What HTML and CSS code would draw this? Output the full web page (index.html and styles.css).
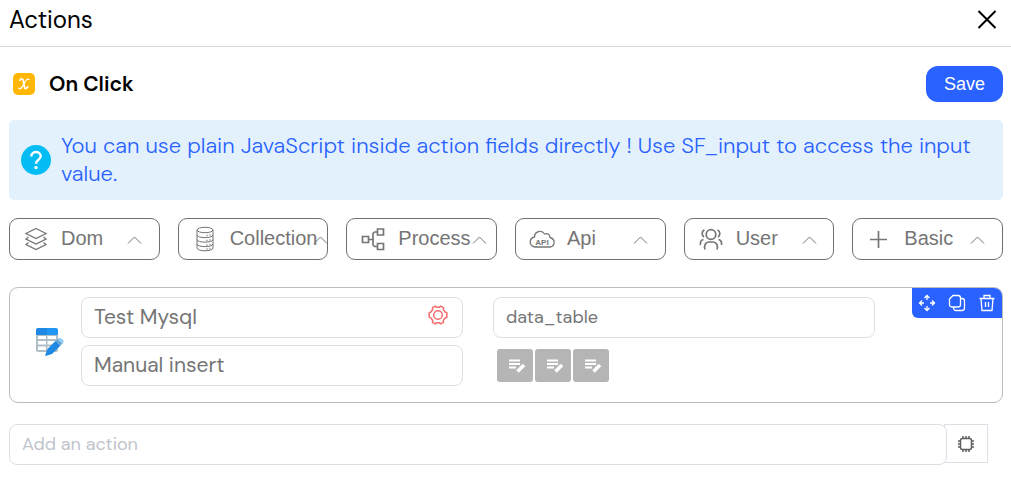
FILE: index.html
```html
<!DOCTYPE html>
<html lang="en">
<head>
    <meta charset="UTF-8">
    <meta name="viewport" content="width=device-width, initial-scale=1.0">
    <title>Actions</title>
    <link rel="stylesheet" href="styles.css">
</head>
<body>
    <!-- Header -->
    <header class="header">
        <h1>Actions</h1>
        <button type="button" class="close-btn" aria-label="Close">
            <svg width="20" height="20" viewBox="0 0 20 20"><path d="M1.500 1l17 17M18.500 1l-17 17"/></svg>
        </button>
    </header>

    <main class="content">
        <div class="event-bar">
            <svg class="event-icon" width="22" height="22" viewBox="0 0 22 22">
                <rect width="22" height="22" rx="5" fill="#ffb703"/>
                <path d="M7 7.200C8.500 5 9.900 5.200 10.400 8L11.300 13.500C11.800 16.300 13.300 16 14.800 13.800" fill="none" stroke="#fff" stroke-width="1.700" stroke-linecap="round"/>
                <path d="M16 6.500C14 5 12.700 7.500 10.900 10.800C9 14.200 7.800 16.700 5.800 15.200" fill="none" stroke="#fff" stroke-width="1.200" stroke-linecap="round"/>
            </svg>
            <h2>On Click</h2>
            <button type="button" class="save-btn">Save</button>
        </div>

        <div class="alert">
            <svg class="alert-icon" width="30" height="30" viewBox="0 0 30 30">
                <circle cx="15" cy="15" r="15" fill="#03bcf4"/>
                <path d="M10.300 11.500C10.300 5.500 19.700 5.700 19.700 11.300C19.700 14.700 15 14.800 15 18.800" fill="none" stroke="#fff" stroke-width="2.400"/>
                <circle cx="15" cy="22.500" r="1.700" fill="#fff"/>
            </svg>
            <p>You can use plain JavaScript inside action fields directly ! Use SF_input to access the input value.</p>
        </div>

        <!-- Action groups -->
        <div class="groups">
            <button type="button" class="group-btn">
                <svg class="group-icon" viewBox="0 0 26 26"><path d="M13 2.500L23 7.500L13 12.500L3 7.500ZM5.500 11L3 13L13 18L23 13L20.500 11M5.500 16.500L3 18.500L13 23.500L23 18.500L20.500 16.500"/></svg>
                <span class="group-name">Dom</span>
                <svg class="chevron" viewBox="0 0 14 8"><path d="M1 7.500L7.500 1L14 7.500"/></svg>
            </button>
            <button type="button" class="group-btn">
                <svg class="group-icon thin" viewBox="0 0 26 26">
                    <ellipse cx="13" cy="4" rx="8" ry="2.700"/>
                    <path d="M5 4V22C5 25.700 21 25.700 21 22V4M5 9C5 12.500 21 12.500 21 9M5 13.500C5 17 21 17 21 13.500M5 18C5 21.500 21 21.500 21 18"/>
                    <path d="M14.500 9.500h1M17.500 9h1M14.500 14.500h1M17.500 14h1M14.500 19h1M17.500 18.500h1M14.500 23h1M17.500 22.500h1" stroke-width="1.500"/>
                </svg>
                <span class="group-name">Collection</span>
                <svg class="chevron" viewBox="0 0 14 8"><path d="M1 7.500L7.500 1L14 7.500"/></svg>
            </button>
            <button type="button" class="group-btn">
                <svg class="group-icon bold" viewBox="0 0 26 26"><path d="M2.500 10.500h6v6h-6zM17.500 3h6v6h-6zM17.500 17.500h6v6h-6zM8.500 13.500H13M17.500 6H14.500L13 7.500V19L14.500 20.500H17.500"/></svg>
                <span class="group-name">Process</span>
                <svg class="chevron" viewBox="0 0 14 8"><path d="M1 7.500L7.500 1L14 7.500"/></svg>
            </button>
            <button type="button" class="group-btn">
                <svg class="group-icon" viewBox="0 0 26 26">
                    <path d="M6 21C-0.500 20 0 12 5.500 11C5.500 5 13 3.500 15.500 8C18.500 7 21 8.500 21 11.500C26.500 13 26.500 20 21 21Z"/>
                    <text x="13" y="18.500" text-anchor="middle">API</text>
                </svg>
                <span class="group-name">Api</span>
                <svg class="chevron" viewBox="0 0 14 8"><path d="M1 7.500L7.500 1L14 7.500"/></svg>
            </button>
            <button type="button" class="group-btn">
                <svg class="group-icon bold" viewBox="0 0 26 26">
                    <circle cx="13" cy="8.500" r="4.800"/>
                    <path d="M7 23.500C5.500 19.500 8 16 10.500 16H15.500C18 16 20.500 19.500 19 23.500M6.500 4C3.500 5 3.500 9.500 6 11M19.500 4C22.500 5 22.500 9.500 20 11M5.500 13.500C3 14 2 16.500 2.500 19M20.500 13.500C23 14 24 16.500 23.500 19"/>
                </svg>
                <span class="group-name">User</span>
                <svg class="chevron" viewBox="0 0 14 8"><path d="M1 7.500L7.500 1L14 7.500"/></svg>
            </button>
            <button type="button" class="group-btn">
                <svg class="group-icon bold" viewBox="0 0 26 26"><path d="M12.500 5V22M4 13.500H21"/></svg>
                <span class="group-name">Basic</span>
                <svg class="chevron" viewBox="0 0 14 8"><path d="M1 7.500L7.500 1L14 7.500"/></svg>
            </button>
        </div>

        <!-- Action card -->
        <section class="card">
            <svg class="card-icon" width="30" height="30" viewBox="0 0 30 30">
                <path d="M1 6V23Q1 25 3 25H21Q23 25 23 23V6Z" fill="#b0bec5"/>
                <path d="M3 9H11V12H3zM12.500 9H21V12H12.500zM3 14H11V17.500H3zM12.500 14H21V17.500H12.500zM3 19.500H11V23H3zM12.500 19.500H21V23H12.500z" fill="#fff"/>
                <path d="M1 8V3Q1 1 3 1H12V8Z" fill="#1e88e5"/>
                <path d="M12 1H21Q23 1 23 3V8H12Z" fill="#2196f3"/>
                <path d="M20.500 14L25.500 18.500L17 27L10.500 29Q10 29 10.300 28L12.500 22Z" fill="#1e88e5"/>
                <path d="M20.500 14L22.500 12L27.500 16.500L25.500 18.500Z" fill="#64a5d8"/>
                <path d="M22.500 12L24 11Q26 10.500 28 13Q29.500 15 27.500 16.500Z" fill="#90caf9"/>
            </svg>
            <div class="card-fields">
                <div class="input-icon">
                    <input type="text" aria-label="Action name" value="Test Mysql">
                    <button type="button" class="gear-btn" aria-label="Settings">
                        <svg width="20" height="20" viewBox="0 0 20 20"><path d="M7.300 1.200L8.500 2.200H11.500L12.700 1.200L15.500 2.700L15.300 4.500L17 7L18.800 7.800V12.200L17 13L15.300 15.500L15.500 17.300L12.700 18.800L11.500 17.800H8.500L7.300 18.800L4.500 17.300L4.700 15.500L3 13L1.200 12.200V7.800L3 7L4.700 4.500L4.500 2.700Z"/><circle cx="10" cy="10" r="4.300"/></svg>
                    </button>
                </div>
                <input type="text" class="small" aria-label="Table" value="data_table">
                <input type="text" aria-label="Mode" value="Manual insert">
                <div class="edit-group">
                    <button type="button" class="edit-btn" aria-label="Edit fields"><svg width="18" height="16" viewBox="0 0 18 16"><path d="M1 2.500h11M1 6h11M1 9.500h7"/><path class="pen" d="M9.500 13.500L16 7"/></svg></button>
                    <button type="button" class="edit-btn" aria-label="Edit values"><svg width="18" height="16" viewBox="0 0 18 16"><path d="M1 2.500h11M1 6h11M1 9.500h7"/><path class="pen" d="M9.500 13.500L16 7"/></svg></button>
                    <button type="button" class="edit-btn" aria-label="Edit output"><svg width="18" height="16" viewBox="0 0 18 16"><path d="M1 2.500h11M1 6h11M1 9.500h7"/><path class="pen" d="M9.500 13.500L16 7"/></svg></button>
                </div>
            </div>
            <div class="card-tools">
                <button type="button" aria-label="Move">
                    <svg width="18" height="18" viewBox="0 0 18 18"><path d="M9 1.500V6M9 12V16.500M1.500 9H6M12 9H16.500M6.500 4L9 1.500L11.500 4M6.500 14L9 16.500L11.500 14M4 6.500L1.500 9L4 11.500M14 6.500L16.500 9L14 11.500"/></svg>
                </button>
                <button type="button" aria-label="Duplicate">
                    <svg width="18" height="18" viewBox="0 0 18 18"><path d="M5 1.500H10Q12.500 1.500 12.500 4V10.500Q12.500 13 10 13H4Q1.500 13 1.500 10.500V5ZM12.500 4.500H14Q16.500 4.500 16.500 7V14Q16.500 16.500 14 16.500H8Q5.500 16.500 5.500 13"/></svg>
                </button>
                <button type="button" aria-label="Delete">
                    <svg width="18" height="18" viewBox="0 0 18 18"><path d="M1.500 4.500H16.500M6 4.500V1.500H12V4.500M3 4.500L4 16.500H14L15 4.500M7.500 8V13M10.500 8V13"/></svg>
                </button>
            </div>
        </section>

        <!-- New action -->
        <div class="add-row">
            <input type="text" class="small" aria-label="Add an action" placeholder="Add an action">
            <button type="button" class="chip-btn" aria-label="Generate">
                <svg width="18" height="18" viewBox="0 0 18 18"><rect x="3.500" y="3.500" width="11" height="11" rx="2"/><path d="M6 1V3.500M9 1V3.500M12 1V3.500M6 14.500V17M9 14.500V17M12 14.500V17M1 6H3.500M1 9H3.500M1 12H3.500M14.500 6H17M14.500 9H17M14.500 12H17"/></svg>
            </button>
        </div>
    </main>
</body>
</html>
```
FILE: styles.css
```css
* {
    box-sizing: border-box;
}

body {
    margin: 0;
    font-family: "DM Sans", Inter, sans-serif;
    color: #000;
    background-color: #fff;
}

h1, h2, p {
    margin: 0;
}

button {
    padding: 0;
    border: none;
    background: none;
    font-family: "Liberation Sans", Arial, sans-serif;
    cursor: pointer;
}

svg {
    display: block;
    flex: none;
}

button svg {
    fill: none;
    stroke: currentColor;
}

.header {
    display: flex;
    align-items: center;
    justify-content: space-between;
    padding: 6px 14px 12px 9px;
    border-bottom: 1px solid #d8d8d8;
}

.header h1 {
    font-size: 24px;
    line-height: 28px;
    font-weight: 400;
}

.close-btn {
    color: #000;
    stroke-width: 2;
}

.content {
    padding: 19px 8px 24px 9px;
}

.event-bar {
    display: flex;
    align-items: center;
    gap: 14px;
    padding-left: 4px;
}

.event-bar h2 {
    font-size: 21px;
    line-height: 28px;
    font-weight: 600;
}

.save-btn {
    margin-left: auto;
    padding: 0 18px;
    height: 36px;
    border-radius: 12px;
    background-color: #2962ff;
    color: #fff;
    font-size: 18px;
}

.alert {
    display: flex;
    align-items: center;
    gap: 10px;
    margin-top: 18px;
    padding: 12px;
    border-radius: 5px;
    background-color: #e3f1fd;
    color: #2962ff;
    font-size: 22px;
    line-height: 28px;
    font-weight: 300;
}

.groups {
    display: grid;
    grid-template-columns: repeat(6, 1fr);
    gap: 18px;
    margin-top: 18px;
}

.group-btn {
    display: flex;
    align-items: center;
    min-width: 0;
    height: 42px;
    padding-left: 13px;
    border: 1px solid #707070;
    border-radius: 9px;
    color: #757575;
    font-size: 20px;
}

.group-icon {
    width: 26px;
    height: 26px;
    margin-right: 12px;
    stroke-width: 1.3;
}

.group-icon.thin {
    stroke-width: 1;
}

.group-icon.bold {
    stroke-width: 1.7;
}

.group-icon text {
    fill: currentColor;
    stroke: none;
    font-size: 8px;
    font-weight: bold;
}

.group-name {
    min-width: 65px;
    padding-bottom: 2px;
    text-align: left;
}

.chevron {
    width: 14px;
    height: 8px;
    margin: 2px 0 0 1px;
    overflow: visible;
}

.card {
    position: relative;
    display: flex;
    align-items: center;
    gap: 16px;
    margin-top: 27px;
    padding: 9px 127px 16px 25px;
    border: 1px solid #bdbdbd;
    border-radius: 9px;
}

.card-fields {
    display: grid;
    flex: 1;
    grid-template-columns: 1fr 1fr;
    gap: 7px 30px;
}

input {
    width: 100%;
    min-width: 0;
    height: 41px;
    padding: 0 12px 2px;
    border: 1px solid #dcdfe6;
    border-radius: 8px;
    background-color: #fff;
    color: #757575;
    font-family: inherit;
    font-size: 21px;
}

input.small {
    font-size: 18px;
}

input::placeholder {
    color: #c0c4cc;
    opacity: 1;
}

.input-icon {
    position: relative;
}

.gear-btn {
    position: absolute;
    top: 8px;
    right: 15px;
    color: #f56c6c;
    stroke-width: 1.5;
}

.edit-group {
    display: flex;
    gap: 2px;
    padding: 4px;
}

.edit-btn {
    display: flex;
    align-items: center;
    justify-content: center;
    width: 36px;
    height: 33px;
    padding-left: 4px;
    border-radius: 3px;
    background-color: #b5b5b5;
    color: #fff;
    stroke-width: 2;
}

.edit-btn .pen {
    stroke-width: 3.5;
}

/* Toolbar over the card corner */
.card-tools {
    position: absolute;
    top: 0;
    right: 0;
    display: flex;
    border-radius: 0 8px 0 6px;
    background-color: #2962ff;
}

.card-tools button {
    display: flex;
    align-items: center;
    justify-content: center;
    width: 30px;
    height: 30px;
    color: #fff;
    stroke-width: 1.3;
}

.add-row {
    display: flex;
    margin-top: 21px;
    padding-right: 15px;
}

.add-row input {
    position: relative;
    flex: 1;
}

.chip-btn {
    display: flex;
    align-items: center;
    justify-content: center;
    width: 44px;
    height: 39px;
    margin-left: -3px;
    border: 1px solid #dcdfe6;
    color: #5f5f5f;
    stroke-width: 1.5;
}
```
